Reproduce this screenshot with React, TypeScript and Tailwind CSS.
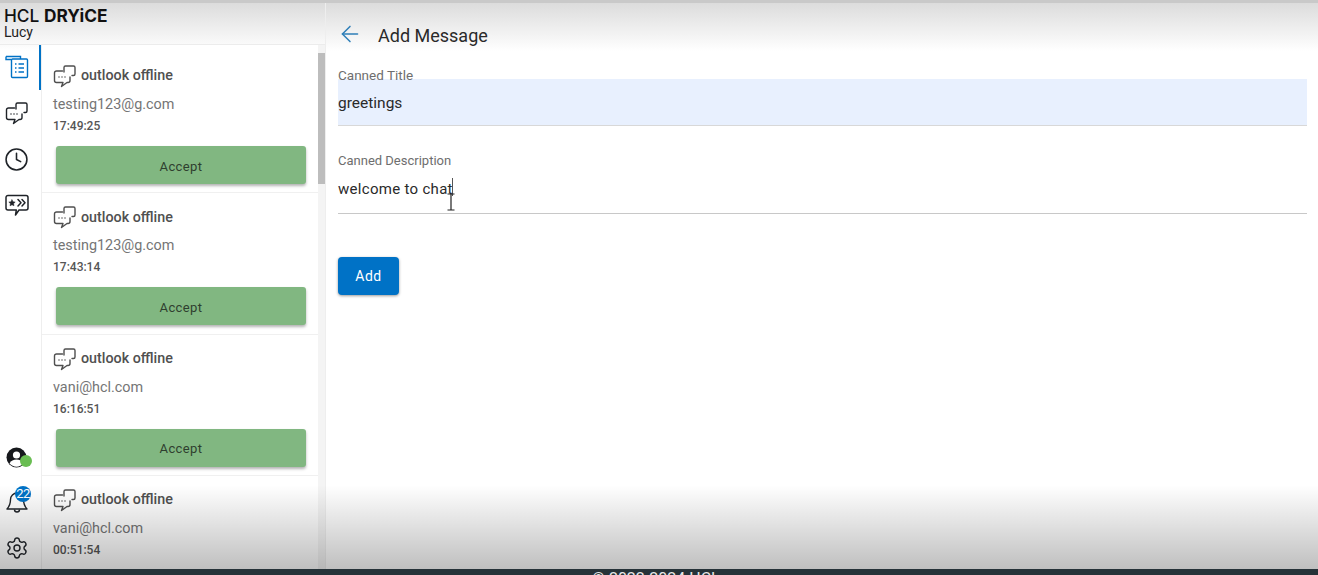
import { ArrowLeft, Clock, Settings } from 'lucide-react'

const tickets = [
  { email: 'testing123@g.com', time: '17:49:25' },
  { email: 'testing123@g.com', time: '17:43:14' },
  { email: 'vani@hcl.com', time: '16:16:51' },
  { email: 'vani@hcl.com', time: '00:51:54' },
]

function ChatIcon({ className }: { className: string }): JSX.Element {
  return (
    <svg viewBox="0 0 24 24" fill="none" stroke="currentColor" strokeWidth="1.4" strokeLinejoin="round" strokeLinecap="round" className={className}>
      <path d="M9.5 7H3.5A2 2 0 0 0 1.5 9v7.5a2 2 0 0 0 2 2h6.5l-1.5 4 5.5-4h1a2 2 0 0 0 2-2V13" />
      <path d="M11 8V3.5A1.5 1.5 0 0 1 12.5 2h8A1.5 1.5 0 0 1 22 3.500V10a1.500 1.500 0 0 1-1.500 1.500H19" />
      <path d="M6 13h.01M9 13h.01M12 13h.01" strokeWidth="1.500" />
    </svg>
  )
}

function ListIcon(): JSX.Element {
  return (
    <svg viewBox="0 0 24 24" fill="none" stroke="#0072c6" strokeWidth="1.4" className="w-[24px] h-[24px]">
      <path d="M1 1.500h14.500V4" />
      <path d="M1 1.500V4.500h5" />
      <rect x="6.500" y="4" width="16" height="18.500" rx="1" />
      <path d="M10 9h1.500M10 13h1.500M10 17h1.500M13.500 9H19M13.500 13H19M13.500 17H19" />
    </svg>
  )
}

function StarChatIcon(): JSX.Element {
  return (
    <svg viewBox="0 0 24 24" fill="none" stroke="#1f2328" strokeWidth="1.500" strokeLinejoin="round" strokeLinecap="round" className="w-[24px] h-[24px]">
      <path d="M3 2.500h18a2 2 0 0 1 2 2V15a2 2 0 0 1-2 2h-7l-3.500 5 .8-5H3a2 2 0 0 1-2-2V4.500a2 2 0 0 1 2-2z" />
      <path d="M7 6.800l1 2 2.200.3-1.600 1.500.4 2.200L7 11.800l-2 1 .4-2.200L3.800 9.100 6 8.800z" fill="#1f2328" strokeWidth="0.500" />
      <path d="M13 6.500l3 3.200-3 3.200M17 6.500l3 3.200-3 3.200" />
    </svg>
  )
}

function AvatarIcon(): JSX.Element {
  return (
    <div className="relative w-[22px] h-[22px]">
      <svg viewBox="0 0 22 22" className="w-[22px] h-[22px]">
        <circle cx="10.500" cy="10.500" r="10" fill="#16181c" />
        <circle cx="10.500" cy="8" r="3.600" fill="#ffffff" />
        <path d="M3.500 16.500c1.500-3 4-4 7-4s5.500 1 7 4c-1.800 2-4.200 3.200-7 3.200s-5.200-1.200-7-3.200z" fill="#ffffff" />
      </svg>
      <div className="absolute left-[14px] top-[8px] w-[12px] h-[12px] rounded-full bg-[#69bd52]" />
    </div>
  )
}

function BellIcon(): JSX.Element {
  return (
    <div className="relative w-[24px] h-[24px]">
      <svg viewBox="0 0 24 24" fill="none" stroke="#1f2328" strokeWidth="1.400" strokeLinejoin="round" className="w-[24px] h-[24px]">
        <path d="M12 3a6.500 6.500 0 0 0-6.500 6.500c0 5-1.200 7-3.500 9.500h20c-2.300-2.500-3.500-4.500-3.500-9.500A6.500 6.500 0 0 0 12 3z" />
        <path d="M9.500 19.500a2.500 2.500 0 0 0 5 0" />
      </svg>
      <div className="absolute left-[10px] top-[-4px] w-[16px] h-[16px] rounded-full bg-[#0072c6] text-white text-[13px] leading-[16px] text-center tracking-[-0.5px]">
        22
      </div>
    </div>
  )
}

function TicketCard({ email, time }: { email: string; time: string }): JSX.Element {
  return (
    <div className="h-[141.300px] shrink-0 border-b border-[#f0f0f0] pl-[11px] pr-[13px] pt-[12px]">
      <div className="flex items-center gap-[4px] h-[24px]">
        <ChatIcon className="w-[24px] h-[24px] text-[#4f4f4f]" />
        <span className="text-[14.300px] font-medium text-[#505050]">outlook offline</span>
      </div>
      <div className="text-[14.400px] leading-[20px] text-[#757575] mt-[7px]">{email}</div>
      <div className="text-[12px] leading-[16px] font-medium text-[#555555] mt-[3px]">{time}</div>
      <button className="block ml-[3px] mt-[12px] w-[250px] h-[38px] pt-[3px] rounded-[3px] bg-[#81b781] shadow-[0_2px_3px_rgba(0,0,0,0.3)] text-[13px] tracking-[0.4px] text-[#2f3f2f]">
        Accept
      </button>
    </div>
  )
}

export default function App(): JSX.Element {
  return (
    <div className="relative w-[1318px] h-[575px] overflow-hidden bg-white flex flex-col font-['Roboto',sans-serif]">
      {/* Video fade behind the top of the page */}
      <div className="absolute left-0 right-0 top-[3px] h-[48px] bg-gradient-to-b from-[#dcdcdc] to-white" />

      <div className="relative h-[3px] shrink-0 bg-[#c9c9c9]" />

      <div className="relative flex-1 flex min-h-0">
        {/* Left panel */}
        <div className="w-[326px] shrink-0 flex flex-col border-r border-[#eeeeee]">
          <div className="h-[42px] shrink-0 pl-[4px] pt-[4px] border-b border-[#ececec]">
            <div className="text-[17.300px] leading-[18px] font-medium text-[#111111] font-['Inter',sans-serif]">
              HCL <span className="font-bold">DRYiCE</span>
            </div>
            <div className="text-[14px] leading-[15px] text-[#222222]">Lucy</div>
          </div>

          <div className="flex-1 flex min-h-0">
            <div className="w-[42px] shrink-0 flex flex-col items-start pl-[5px] border-r border-[#eeeeee] relative">
              <div className="absolute left-[39px] top-0 w-[2px] h-[45px] bg-[#0072c6]" />
              <div className="mt-[10px]"><ListIcon /></div>
              <div className="mt-[22px]"><ChatIcon className="w-[24px] h-[24px] text-[#1f2328]" /></div>
              <div className="mt-[22px] ml-[-1px]"><Clock className="w-[25px] h-[25px] text-[#1f2328]" strokeWidth={1.500} /></div>
              <div className="mt-[21px]"><StarChatIcon /></div>
              <div className="flex-1" />
              <div className="mb-[21px] ml-[1px]"><AvatarIcon /></div>
              <div className="mb-[22px]"><BellIcon /></div>
              <div className="mb-[9px]"><Settings className="w-[24px] h-[24px] text-[#1f2328]" strokeWidth={1.400} /></div>
            </div>

            <div className="flex-1 flex flex-col overflow-hidden bg-white pt-[7px]">
              {tickets.map((t) => (
                <TicketCard key={t.time} email={t.email} time={t.time} />
              ))}
            </div>

            <div className="w-[7px] shrink-0 bg-[#f4f4f4] pt-[8px]">
              <div className="h-[131px] bg-[#bdbdbd]" />
            </div>
          </div>
        </div>

        {/* Main form */}
        <div className="flex-1 min-w-0 pl-[12px] pr-[11px]">
          <div className="h-[64px] flex items-start pt-[18px]">
            <ArrowLeft className="w-[26px] h-[26px] ml-[-1px] text-[#2f7fb8]" strokeWidth={1.400} />
            <span className="ml-[15px] mt-[3px] text-[18px] leading-[24px] text-[#2a2a2a]">Add Message</span>
          </div>

          <div className="text-[13.500px] leading-[16px] text-[#6e6e6e] h-[12px]">Canned Title</div>
          <div className="h-[47px] bg-[#e8f0fe] border-b border-[#d8d8d8] pt-[14px] text-[15.500px] leading-[20px] text-[#2a2a2a]">
            greetings
          </div>

          <div className="mt-[27px] text-[13px] leading-[16px] text-[#6e6e6e]">Canned Description</div>
          <div className="relative mt-[1px] h-[44px] border-b border-[#c8c8c8] pt-[9px] text-[15px] leading-[20px] text-[#2a2a2a] tracking-[0.3px]">
            <span>welcome to chat</span>
            <span className="absolute left-[114px] top-[8px] w-px h-[18px] bg-[#555555]" />
            <svg viewBox="0 0 10 18" fill="none" stroke="#222222" strokeWidth="1.200" className="absolute left-[108px] top-[23px] w-[10px] h-[18px]">
              <path d="M1.500 1h7M5 1v16M1.500 17h7" />
            </svg>
          </div>

          <button className="block mt-[43px] w-[61px] h-[38px] rounded-[4px] bg-[#0072c6] shadow-[0_1px_3px_rgba(0,0,0,0.4)] text-white text-[14px] tracking-[0.5px]">
            Add
          </button>
        </div>
      </div>

      <div className="relative h-[6px] shrink-0 bg-[#263238] overflow-hidden text-center text-[#e8e8e8] text-[16px] leading-[16px] pt-[2px] pr-[6px]">
        © 2022-2024 HCL
      </div>

      <div className="absolute left-0 right-0 top-[485px] h-[84px] pointer-events-none bg-gradient-to-b from-black/0 to-black/25" />
    </div>
  )
}
